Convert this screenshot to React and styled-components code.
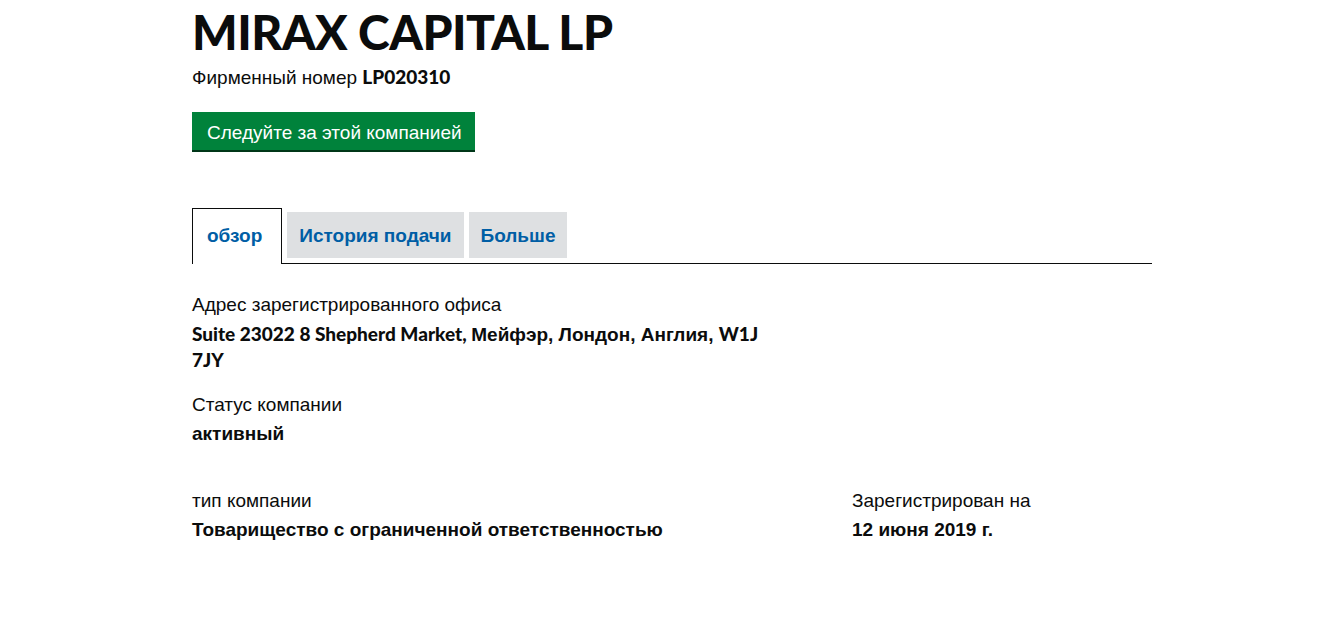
import React from 'react';
import styled, {createGlobalStyle} from 'styled-components';

const Global = createGlobalStyle`
body {
  margin: 0;
  background: #fff;
  color: #0b0c0c;
  font-family: "Liberation Sans", Arial, sans-serif;
}
`;

const Page = styled.main`
width: 960px;
margin-left: 192px;
padding-top: 4px;
`;

const Latin = styled.span`
font-family: Lato, "Liberation Sans", sans-serif;
`;

const Heading = styled.h1`
margin: 0;
font-family: Lato, "Liberation Sans", sans-serif;
font-weight: 900;
font-size: 48px;
line-height: 56px;
letter-spacing: -0.5px;
`;

const CompanyNumber = styled.p`
margin: 4px 0 0;
font-size: 19px;
line-height: 25px;

strong {
  font-family: Lato, "Liberation Sans", sans-serif;
  font-weight: 900;
}
`;

const FollowButton = styled.a`
display: block;
width: fit-content;
margin-top: 22px;
padding: 8px 13px 5px 15px;
background: #00823b;
color: #fff;
font-size: 19px;
line-height: 25px;
box-shadow: 0 2px 0 #003618;
text-decoration: none;
`;

const TabList = styled.ul`
display: flex;
align-items: flex-end;
margin: 58px 0 0;
padding: 0;
list-style: none;
border-bottom: 1px solid #0b0c0c;
`;

const Tab = styled.li`
margin: 0 5px ${p => (p.$active ? '-1px' : '5px')} 0;
padding: ${p => (p.$active ? '14px 19px 16px 14px' : '11px 12px 10px 12px')};
background: ${p => (p.$active ? '#fff' : '#dee0e2')};
border: ${p => (p.$active ? '1px solid #0b0c0c' : 'none')};
border-bottom: none;
color: #005ea5;
font-weight: 700;
font-size: 19px;
line-height: 25px;
cursor: pointer;
`;

const Details = styled.div`
padding-top: 28px;
`;

const Block = styled.dl`
margin: 0 0 ${p => p.$gap || 0}px;
max-width: ${p => p.$width || 'none'};
`;

const Label = styled.dt`
font-size: 19px;
line-height: 25px;
`;

const Value = styled.dd`
margin: 4px 0 0;
font-size: 19px;
font-weight: 700;
line-height: 25px;

${Latin} {
  font-weight: 900;
}
`;

const Columns = styled.div`
display: grid;
grid-template-columns: 660px 1fr;
`;

export default function App() {
  return (
    <Page>
      <Global />
      <Heading>MIRAX CAPITAL LP</Heading>
      <CompanyNumber>
        Фирменный номер <strong>LP020310</strong>
      </CompanyNumber>
      <FollowButton href="#">Следуйте за этой компанией</FollowButton>

      <TabList>
        <Tab $active>обзор</Tab>
        <Tab>История подачи</Tab>
        <Tab>Больше</Tab>
      </TabList>

      <Details>
        <Block $gap={19} $width="580px">
          <Label>Адрес зарегистрированного офиса</Label>
          <Value>
            <Latin>Suite 23022 8 Shepherd Market, </Latin>Мейфэр, Лондон, Англия, <Latin>W1J 7JY</Latin>
          </Value>
        </Block>
        <Block $gap={42}>
          <Label>Статус компании</Label>
          <Value>активный</Value>
        </Block>
        <Columns>
          <Block>
            <Label>тип компании</Label>
            <Value>Товарищество с ограниченной ответственностью</Value>
          </Block>
          <Block>
            <Label>Зарегистрирован на</Label>
            <Value>12 июня 2019 г.</Value>
          </Block>
        </Columns>
      </Details>
    </Page>
  );
}
